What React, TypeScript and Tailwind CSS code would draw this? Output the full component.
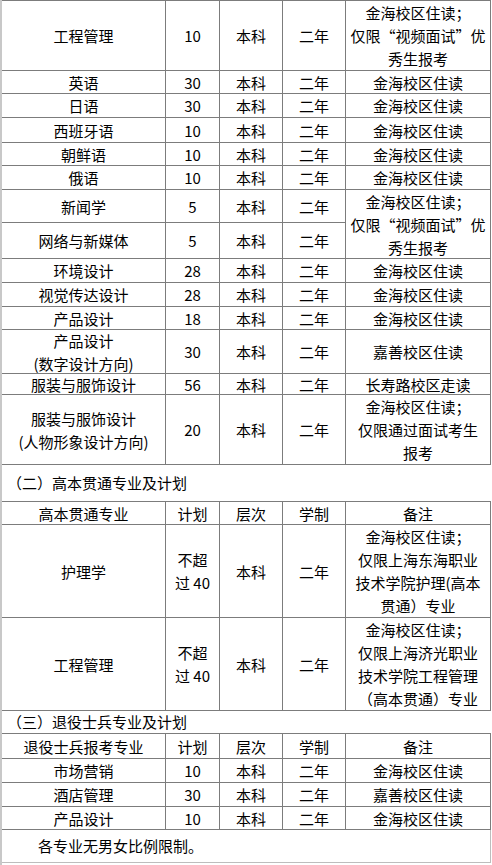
import React from "react";

const font = { fontFamily: '"Noto Sans CJK SC", "Noto Sans", sans-serif' };

type CellProps = { children?: React.ReactNode; className?: string };

function Cell({ children, className = "" }: CellProps) {
  return (
    <div
      className={
        "flex items-center justify-center text-center border-r border-b border-[#7c7c7c] whitespace-nowrap leading-[23px] " +
        className
      }
    >
      <div>{children}</div>
    </div>
  );
}

function Row({
  a,
  b,
  c = "本科",
  d = "二年",
  e,
  aClass = "",
  bClass = "",
}: {
  a: React.ReactNode;
  b: React.ReactNode;
  c?: React.ReactNode;
  d?: React.ReactNode;
  e?: React.ReactNode;
  aClass?: string;
  bClass?: string;
}) {
  return (
    <>
      <Cell className={aClass}>{a}</Cell>
      <Cell className={bClass}>{b}</Cell>
      <Cell>{c}</Cell>
      <Cell>{d}</Cell>
      {e !== undefined && <Cell>{e}</Cell>}
    </>
  );
}

export default function App() {
  return (
    <div
      className="w-[492px] h-[865px] bg-white text-black text-[15px] border-l-2 border-[#c8c8c8] overflow-hidden"
      style={font}
    >
      {/* Table 1 */}
      <div className="grid w-[489px] grid-cols-[164px_54px_63px_63px_145px] grid-rows-[70px_23px_24px_25px_23px_24px_33px_36px_24px_24px_23px_44px_21px_70px] border-t border-[#7c7c7c]">
        <Row
          a="工程管理"
          b="10"
          e={
            <>
              金海校区住读；
              <br />
              仅限“视频面试”优
              <br />
              秀生报考
            </>
          }
        />
        <Row a="英语" b="30" e="金海校区住读" />
        <Row a="日语" b="30" e="金海校区住读" />
        <Row a="西班牙语" b="10" e="金海校区住读" />
        <Row a="朝鲜语" b="10" e="金海校区住读" />
        <Row a="俄语" b="10" e="金海校区住读" />
        <Cell>新闻学</Cell>
        <Cell>5</Cell>
        <Cell>本科</Cell>
        <Cell>二年</Cell>
        <Cell className="row-span-2">
          金海校区住读；
          <br />
          仅限“视频面试”优
          <br />
          秀生报考
        </Cell>
        <Row a="网络与新媒体" b="5" />
        <Row a="环境设计" b="28" e="金海校区住读" />
        <Row a="视觉传达设计" b="28" e="金海校区住读" />
        <Row a="产品设计" b="18" e="金海校区住读" />
        <Row
          a={
            <>
              产品设计
              <br />
              (数字设计方向)
            </>
          }
          aClass="leading-[17px]"
          b="30"
          e="嘉善校区住读"
        />
        <Row a="服装与服饰设计" b="56" e="长寿路校区走读" />
        <Row
          a={
            <>
              服装与服饰设计
              <br />
              (人物形象设计方向)
            </>
          }
          aClass="leading-[16px]"
          b="20"
          e={
            <>
              金海校区住读；
              <br />
              仅限通过面试考生
              <br />
              报考
            </>
          }
        />
      </div>

      <div className="h-[36px] flex items-center pl-[5px] whitespace-nowrap">
        （二）高本贯通专业及计划
      </div>

      {/* Table 2 */}
      <div className="grid w-[489px] grid-cols-[164px_54px_63px_63px_145px] grid-rows-[23px_93px_93px] border-t border-[#7c7c7c]">
        <Row a="高本贯通专业" b="计划" c="层次" d="学制" e="备注" />
        <Row
          a="护理学"
          b={
            <>
              不超
              <br />
              过 40
            </>
          }
          e={
            <>
              金海校区住读；
              <br />
              仅限上海东海职业
              <br />
              技术学院护理(高本
              <br />
              贯通）专业
            </>
          }
        />
        <Row
          a="工程管理"
          b={
            <>
              不超
              <br />
              过 40
            </>
          }
          e={
            <>
              金海校区住读；
              <br />
              仅限上海济光职业
              <br />
              技术学院工程管理
              <br />
              （高本贯通）专业
            </>
          }
        />
      </div>

      <div className="h-[22px] flex items-center pl-[5px] whitespace-nowrap">
        （三）退役士兵专业及计划
      </div>

      {/* Table 3 */}
      <div className="grid w-[489px] grid-cols-[164px_54px_63px_63px_145px] grid-rows-[25px_24px_24px_23px_33px] border-t border-[#7c7c7c]">
        <Row a="退役士兵报考专业" b="计划" c="层次" d="学制" e="备注" />
        <Row a="市场营销" b="10" e="金海校区住读" />
        <Row a="酒店管理" b="30" e="嘉善校区住读" />
        <Row a="产品设计" b="10" e="金海校区住读" />
        <div className="col-span-5 flex items-center pl-[36px] border-r border-b border-[#bdbdbd] whitespace-nowrap">
          各专业无男女比例限制。
        </div>
      </div>
    </div>
  );
}
